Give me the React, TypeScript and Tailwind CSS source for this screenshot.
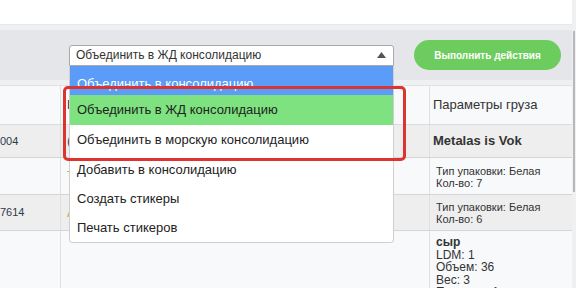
export default function App() {
  const options = [
    { label: "Объединить в консолидацию", cls: "h-[29px] pt-[6px] bg-[#5a9cf8] text-white" },
    { label: "Объединить в ЖД консолидацию", cls: "h-[30px] bg-[#7de27f] text-[#222]" },
    { label: "Объединить в морскую консолидацию", cls: "h-[30px] text-[#222]" },
    { label: "Добавить в консолидацию", cls: "h-[29px] text-[#222]" },
    { label: "Создать стикеры", cls: "h-[29px] text-[#222]" },
    { label: "Печать стикеров", cls: "h-[29px] text-[#222]" },
  ];

  return (
    <div className="relative w-[576px] h-[288px] overflow-hidden bg-[#eff0f2] font-['Liberation_Sans',Arial,sans-serif] text-[#333]">
      <div className="w-[572px] flex flex-col">
        {/* top card */}
        <div className="h-[25px] bg-white border-b border-[#e6e8ea]" />

        {/* toolbar */}
        <div className="mt-[5px] h-[50px] bg-[#e4e6e9] flex items-center">
          <div className="ml-[69px] w-[325px] h-[21px] bg-white border border-[#a9a9a9] rounded-t-[3px] flex items-center justify-between pl-[6px] pr-[7px]">
            <span className="text-[12px] leading-none text-[#333]">Объединить в ЖД консолидацию</span>
            <svg width="9" height="6" viewBox="0 0 9 6">
              <path d="M0 6 L4.5 0 L9 6 Z" fill="#555" />
            </svg>
          </div>
          <button className="ml-[20px] w-[147px] h-[30px] rounded-full bg-[#6dcc5e] text-white text-[10px] font-bold">
            Выполнить действия
          </button>
        </div>

        {/* table */}
        <div className="mt-[5px] bg-white border-t border-[#dfe1e4] flex flex-col text-[11px]">
          <div className="h-[39px] bg-[#f8f9fb] grid grid-cols-[61px_369px_1fr] border-b border-[#dcdcdc]">
            <div className="border-r border-[#e0e0e0]" />
            <div className="border-r border-[#e0e0e0] flex items-center pl-[6px] text-[13px] text-[#333]">Получатель</div>
            <div className="flex items-center pl-[3px] text-[13px] text-[#333]">Параметры груза</div>
          </div>
          <div className="h-[33px] bg-[#eeeeee] grid grid-cols-[61px_369px_1fr] border-b border-[#d6d6d6]">
            <div className="border-r border-[#e0e0e0] flex items-center text-[11px] text-[#2d3a4a]">004</div>
            <div className="border-r border-[#e0e0e0] flex items-center pl-[6px] text-[13px] text-[#2b4a7a]">(Company</div>
            <div className="flex items-center pl-[3px] text-[13px] font-bold text-[#333]">Metalas is Vok</div>
          </div>
          <div className="h-[37px] bg-[#f8f9fb] grid grid-cols-[61px_369px_1fr] border-b border-[#d6d6d6]">
            <div className="border-r border-[#e0e0e0]" />
            <div className="border-r border-[#e0e0e0] flex items-center pl-[6px] text-[13px] text-[#d4a24a]">Тест</div>
            <div className="pl-[6px] pt-[7px] leading-[12px] text-[#333]">
              <div>Тип упаковки: Белая</div>
              <div>Кол-во: 7</div>
            </div>
          </div>
          <div className="h-[36px] bg-[#eeeeee] grid grid-cols-[61px_369px_1fr] border-b border-[#d6d6d6]">
            <div className="border-r border-[#e0e0e0] flex items-center text-[11px] text-[#2d3a4a]">7614</div>
            <div className="border-r border-[#e0e0e0] flex items-center pl-[6px] text-[13px] text-[#d4a24a]">Адрес</div>
            <div className="pl-[6px] pt-[6px] leading-[12px] text-[#333]">
              <div>Тип упаковки: Белая</div>
              <div>Кол-во: 6</div>
            </div>
          </div>
          <div className="h-[70px] bg-[#f8f9fb] grid grid-cols-[61px_369px_1fr]">
            <div className="border-r border-[#e0e0e0]" />
            <div className="border-r border-[#e0e0e0]" />
            <div className="pl-[6px] pt-[5px] leading-[12.5px] text-[12px] text-[#333]">
              <div className="font-bold">сыр</div>
              <div>LDM: 1</div>
              <div>Объем: 36</div>
              <div>Вес: 3</div>
              <div>Паллеты: 1</div>
            </div>
          </div>
        </div>
      </div>

      {/* scrollbar */}
      <div className="absolute right-[1px] top-[31px] w-[2px] h-[161px] bg-[#b8b8b8]" />

      {/* open select list */}
      <div className="absolute left-[69px] top-[66px] w-[325px] bg-white border-x border-b border-[#cfcfcf] rounded-b-[4px] overflow-hidden">
        {options.map((o) => (
          <div key={o.label} className={`flex items-center pl-[7px] text-[13px] ${o.cls}`}>
            {o.label}
          </div>
        ))}
      </div>

      {/* annotation frame */}
      <div className="absolute left-[63px] top-[86px] w-[343px] h-[75px] border-[3px] border-[#dc3530] rounded-[5px]" />
    </div>
  );
}
